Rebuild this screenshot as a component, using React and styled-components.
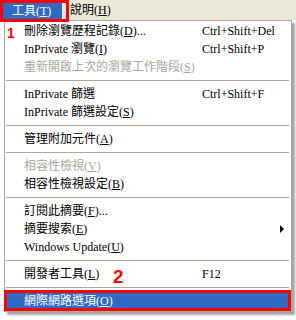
import styled, { createGlobalStyle } from "styled-components";

const GlobalStyle = createGlobalStyle`
  html, body {
    margin: 0;
    padding: 0;
    background: #fff;
  }
  body {
    font-family: "Liberation Serif", "Noto Sans CJK TC", serif;
    font-size: 12px;
  }
`;

const items = [
  { label: "刪除瀏覽歷程記錄", key: "D", suffix: "...", shortcut: "Ctrl+Shift+Del" },
  { label: "InPrivate 瀏覽", key: "I", shortcut: "Ctrl+Shift+P" },
  { label: "重新開啟上次的瀏覽工作階段", key: "S", disabled: true },
  "sep",
  { label: "InPrivate 篩選", shortcut: "Ctrl+Shift+F" },
  { label: "InPrivate 篩選設定", key: "S" },
  "sep",
  { label: "管理附加元件", key: "A" },
  "sep",
  { label: "相容性檢視", key: "V", disabled: true },
  { label: "相容性檢視設定", key: "B" },
  "sep",
  { label: "訂閱此摘要", key: "F", suffix: "..." },
  { label: "摘要搜索", key: "E", submenu: true },
  { label: "Windows Update", key: "U" },
  "sep",
  { label: "開發者工具", key: "L", shortcut: "F12" },
  "sep",
  { label: "網際網路選項", key: "O", highlight: true },
];

export default function App() {
  return (
    <>
      <GlobalStyle />
      <Page>
        <MenuBar>
          <BarItem $active>
            工具(<u>T</u>)
          </BarItem>
          <BarItem>
            說明(<u>H</u>)
          </BarItem>
        </MenuBar>
        <Menu>
          {items.map((item, i) =>
            item === "sep" ? (
              <Separator key={i} />
            ) : (
              <Item key={i} $disabled={item.disabled} $highlight={item.highlight}>
                <span>
                  {item.label}
                  {item.key && (
                    <>
                      (<u>{item.key}</u>)
                    </>
                  )}
                  {item.suffix}
                </span>
                <span>{item.shortcut}</span>
                {item.submenu ? <Arrow /> : <span />}
              </Item>
            )
          )}
        </Menu>
        <Num $size={14} style={{ left: 7, top: 25 }}>1</Num>
        <Num $size={19} style={{ left: 113, top: 266 }}>2</Num>
      </Page>
    </>
  );
}

const Page = styled.div`
  position: relative;
  width: 296px;
  height: 320px;
  overflow: hidden;
  background: #fff;
`;

const MenuBar = styled.div`
  display: flex;
  align-items: flex-start;
  height: 20px;
  background: #ece9d8;
`;

const BarItem = styled.div`
  position: relative;
  z-index: 2;
  box-sizing: border-box;
  height: ${(p) => (p.$active ? "22px" : "20px")};
  width: ${(p) => (p.$active ? "69px" : "auto")};
  padding-left: ${(p) => (p.$active ? "9px" : "1px")};
  line-height: ${(p) => (p.$active ? "16px" : "20px")};
  color: ${(p) => (p.$active ? "#fff" : "#000")};
  border: ${(p) => (p.$active ? "3px solid #f00" : "none")};
  background: ${(p) =>
    p.$active
      ? "linear-gradient(to right, #316ac5 59px, #ece9d8 59px)"
      : "transparent"};
  white-space: nowrap;
`;

const Menu = styled.div`
  box-sizing: border-box;
  width: 288px;
  margin-left: 4px;
  padding: 1px 0;
  background: #fff;
  border: 1px solid #aca899;
  box-shadow: 3px 3px 2px rgba(0, 0, 0, 0.35);
`;

const Item = styled.div`
  position: relative;
  display: grid;
  grid-template-columns: 178px 1fr 16px;
  align-items: center;
  box-sizing: border-box;
  height: ${(p) => (p.$highlight ? "21px" : "18px")};
  margin: ${(p) => (p.$highlight ? "-2px 0 -1px -1px" : "0")};
  padding-left: ${(p) => (p.$highlight ? "17px" : "19px")};
  border: ${(p) => (p.$highlight ? "3px solid #f00" : "none")};
  background: ${(p) => (p.$highlight ? "#316ac5" : "transparent")};
  color: ${(p) => (p.$highlight ? "#fff" : p.$disabled ? "#aca899" : "#000")};
  white-space: nowrap;
  line-height: 14px;
`;

const Separator = styled.div`
  height: 1px;
  margin: 4px 2px 4px 1px;
  background: #aca899;
`;

const Arrow = styled.span`
  justify-self: start;
  margin-left: 5px;
  width: 0;
  height: 0;
  border-top: 4px solid transparent;
  border-bottom: 4px solid transparent;
  border-left: 4px solid #000;
`;

const Num = styled.div`
  position: absolute;
  z-index: 3;
  font-family: "Liberation Sans", Arial, sans-serif;
  font-weight: bold;
  font-size: ${(p) => p.$size}px;
  line-height: 1.15;
  color: #f00;
`;
